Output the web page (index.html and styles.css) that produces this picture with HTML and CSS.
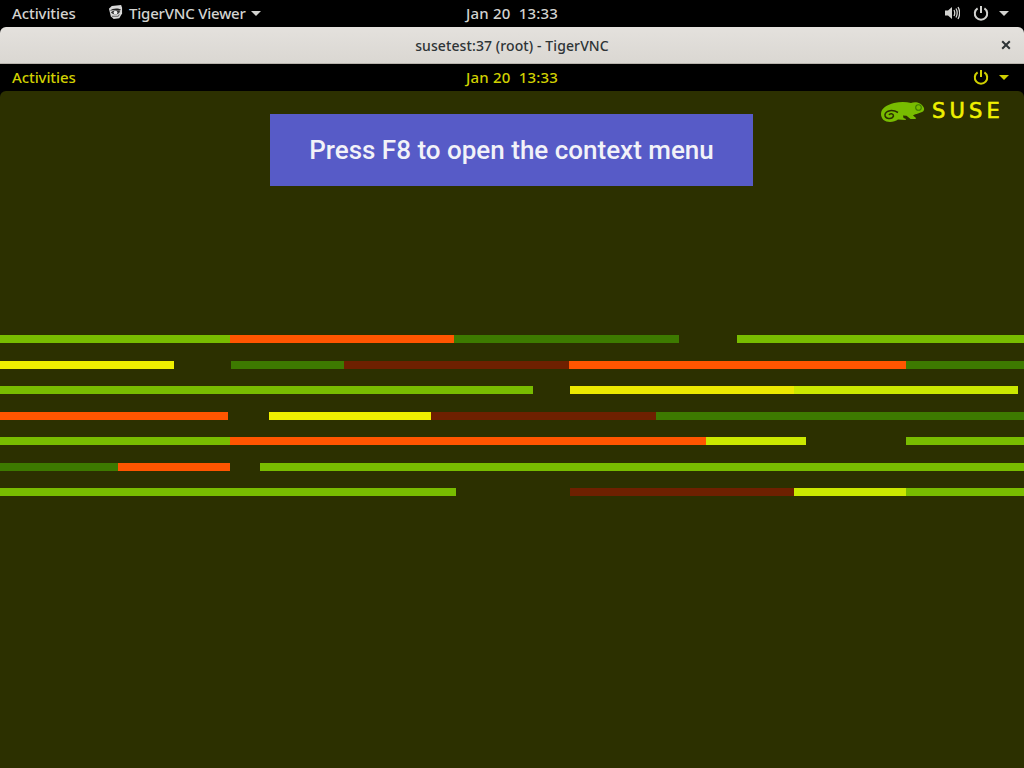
FILE: index.html
```html
<!DOCTYPE html>
<html lang="en">
<head>
    <meta charset="UTF-8">
    <title>susetest:37 (root) - TigerVNC</title>
    <link rel="stylesheet" href="styles.css">
</head>
<body>

    <!-- host gnome panel -->
    <div class="panel panel-host">
        <div class="panel-left">
            <span class="activities">Activities</span>
            <span class="app-menu">
                <svg class="app-icon" viewBox="0 0 16 16" width="15" height="15">
                    <path d="M1 4 L4 1 L14 0 L15 3 L15 9 L12 14 L6 15 L3 12 Z" fill="#d8d8d8"/>
                    <path d="M2 6 C5 3 11 3 14 5 L12 6 C9 5 6 5 2 6 Z" fill="#222"/>
                    <path d="M3 8 C6 5 10 5 13 7 C11 11 6 11 3 8 Z" fill="#333"/>
                    <circle cx="8" cy="8" r="2" fill="#eee"/>
                    <path d="M4 12 L11 12 L12 10" fill="none" stroke="#555" stroke-width="1"/>
                </svg>
                TigerVNC Viewer
                <i class="caret"></i>
            </span>
        </div>
        <div class="panel-clock">Jan 20&nbsp; 13:33</div>
        <div class="panel-right">
            <svg class="status-icon" viewBox="0 0 16 16" width="16" height="16">
                <path d="M1 5.5 H4 L8 2 V14 L4 10.5 H1 Z" fill="currentColor"/>
                <path d="M10 5 C11 7 11 9 10 11 M12 3.5 C13.6 6.5 13.6 9.5 12 12.5 M14 2 C16.2 6 16.2 10 14 14" fill="none" stroke="currentColor" stroke-width="1.3"/>
            </svg>
            <svg class="status-icon power" viewBox="0 0 16 16" width="16" height="16">
                <path d="M4.6 3.4 A6.2 6.2 0 1 0 11.4 3.4 M8 1 V8" fill="none" stroke="currentColor" stroke-width="2"/>
            </svg>
            <i class="caret"></i>
        </div>
    </div>

    <!-- window titlebar -->
    <div class="titlebar">
        <span class="title">susetest:37 (root) - TigerVNC</span>
        <svg class="close" viewBox="0 0 10 10" width="10" height="10">
            <path d="M1.2 1.2 L8.8 8.8 M8.8 1.2 L1.2 8.8" fill="none" stroke="#2e3436" stroke-width="2"/>
        </svg>
    </div>

    <!-- remote session -->
    <div class="panel panel-remote">
        <div class="panel-left">
            <span class="activities">Activities</span>
        </div>
        <div class="panel-clock">Jan 20&nbsp; 13:33</div>
        <div class="panel-right">
            <svg class="status-icon power" viewBox="0 0 16 16" width="16" height="16">
                <path d="M4.6 3.4 A6.2 6.2 0 1 0 11.4 3.4 M8 1 V8" fill="none" stroke="currentColor" stroke-width="2"/>
            </svg>
            <i class="caret"></i>
        </div>
    </div>

    <div class="desktop">
        <div class="logo">
            <svg class="chameleon" viewBox="0 0 44 21" width="44" height="21">
                <path d="M0 13 C0 7 6 4 13 2 C19 0.500 25 0.500 30 2 C34 0.500 40 1 43 7 C43.500 9 42.500 10.500 41 11 L37 12.500 C35 13 33.500 13.500 32 14.500 L35 17 L34.500 18 L29.500 18 L25.500 14.800 L22 14.500 L22.500 17 L25 18 L24.500 19 L17 18.500 C15 20 12 21 9 21 C4 21 0 18 0 13 Z" fill="#78bc00"/>
                <path d="M17 11.500 C12 8.500 5 9 4 13.500 C3.500 18 11 19 12.500 15 C12.500 12.500 9 12 8 14" fill="none" stroke="#2c3000" stroke-width="1.500"/>
                <circle cx="37.500" cy="6.500" r="2.800" fill="none" stroke="#3d7a00" stroke-width="1.100"/>
            </svg>
            <span class="suse">SUSE</span>
        </div>

        <div class="banner">Press F8 to open the context menu</div>

        <div class="bars">
            <div class="bar-row">
                <span class="seg green" style="width:230px"></span>
                <span class="seg orange" style="width:224px"></span>
                <span class="seg dark" style="width:225px"></span>
                <span class="seg" style="width:58px"></span>
                <span class="seg green" style="width:287px"></span>
            </div>
            <div class="bar-row">
                <span class="seg yellow" style="width:174px"></span>
                <span class="seg" style="width:57px"></span>
                <span class="seg dark" style="width:112.5px"></span>
                <span class="seg brown" style="width:225.5px"></span>
                <span class="seg orange" style="width:337px"></span>
                <span class="seg dark" style="width:118px"></span>
            </div>
            <div class="bar-row">
                <span class="seg green" style="width:533px"></span>
                <span class="seg" style="width:37px"></span>
                <span class="seg yellow2" style="width:224px"></span>
                <span class="seg lime" style="width:224px"></span>
            </div>
            <div class="bar-row">
                <span class="seg orange" style="width:228px"></span>
                <span class="seg" style="width:41px"></span>
                <span class="seg yellow" style="width:162px"></span>
                <span class="seg brown" style="width:225px"></span>
                <span class="seg dark" style="width:368px"></span>
            </div>
            <div class="bar-row">
                <span class="seg green" style="width:230px"></span>
                <span class="seg orange" style="width:475.5px"></span>
                <span class="seg lime" style="width:100.5px"></span>
                <span class="seg" style="width:100px"></span>
                <span class="seg green" style="width:118px"></span>
            </div>
            <div class="bar-row">
                <span class="seg dark" style="width:118px"></span>
                <span class="seg orange" style="width:112px"></span>
                <span class="seg" style="width:30px"></span>
                <span class="seg green" style="width:764px"></span>
            </div>
            <div class="bar-row">
                <span class="seg green" style="width:455.5px"></span>
                <span class="seg" style="width:114.5px"></span>
                <span class="seg brown" style="width:224px"></span>
                <span class="seg lime" style="width:112px"></span>
                <span class="seg green" style="width:118px"></span>
            </div>
        </div>
    </div>

</body>
</html>
```

FILE: styles.css
```css
html, body {
    margin: 0;
    height: 100%;
    overflow: hidden;
    background-color: #000;
}
body {
    display: flex;
    flex-direction: column;
    font-family: "Noto Sans", "Open Sans", sans-serif;
    font-size: 15px;
    font-weight: 500;
}
.panel {
    display: grid;
    grid-template-columns: 1fr auto 1fr;
    align-items: center;
    box-sizing: border-box;
    height: 27px;
    background-color: #000;
    padding: 0 12px 2px;
    flex: none;
}
.panel-host {
    color: #d3d3d0;
}
.panel-remote {
    color: #d0d000;
}
.panel-clock {
    letter-spacing: 0.2px;
}
.panel-left {
    display: flex;
    align-items: center;
}
.activities {
    width: 96px;
    letter-spacing: -0.1px;
}
.app-menu {
    display: flex;
    align-items: center;
    letter-spacing: -0.2px;
}
.app-icon {
    margin-right: 6px;
}
.panel-right {
    display: flex;
    align-items: center;
    justify-content: flex-end;
}
.status-icon {
    display: block;
}
.power {
    margin-left: 13px;
}
.caret {
    display: block;
    width: 0;
    height: 0;
    margin-top: 1px;
    margin-left: 10px;
    margin-right: 3px;
    border-left: 5px solid transparent;
    border-right: 5px solid transparent;
    border-top: 5px solid currentColor;
}
.app-menu .caret {
    margin-left: 5px;
}
.titlebar {
    flex: none;
    display: flex;
    align-items: center;
    justify-content: center;
    position: relative;
    height: 36px;
    border-bottom: 1px solid #b8b4ad;
    border-radius: 6px 6px 0 0;
    background: linear-gradient(#e4e1dd, #dad7d2);
    color: #2e3436;
    font-size: 14px;
    letter-spacing: 0.1px;
}
.close {
    position: absolute;
    right: 13px;
    top: 13px;
}
.desktop {
    flex: 1;
    position: relative;
    background-color: #2c3000;
    border-radius: 6px 6px 0 0;
}
.logo {
    position: absolute;
    top: 10px;
    right: 20px;
    display: flex;
    align-items: center;
    gap: 7px;
}
.chameleon {
    display: block;
}
.suse {
    color: #f0f000;
    font-family: "DejaVu Sans", "Liberation Sans", sans-serif;
    font-size: 21px;
    font-weight: 400;
    line-height: 21px;
    letter-spacing: 4.2px;
    -webkit-text-stroke: 0.6px #f0f000;
}
.banner {
    height: 72px;
    margin: 23px 271px 0 270px;
    display: flex;
    align-items: center;
    justify-content: center;
    background-color: #575bc7;
    color: #f2f2f8;
    font-family: Roboto, sans-serif;
    font-size: 26px;
    font-weight: 500;
}
.bars {
    display: flex;
    flex-direction: column;
    gap: 17.55px;
    margin-top: 149px;
}
.bar-row {
    display: flex;
    height: 8px;
}
.seg {
    display: block;
    height: 100%;
}
.green { background-color: #78bc00; }
.orange { background-color: #ff5500; }
.dark { background-color: #3d7a00; }
.brown { background-color: #6e2000; }
.yellow { background-color: #f0f000; }
.yellow2 { background-color: #ece800; }
.lime { background-color: #cbe800; }
```
